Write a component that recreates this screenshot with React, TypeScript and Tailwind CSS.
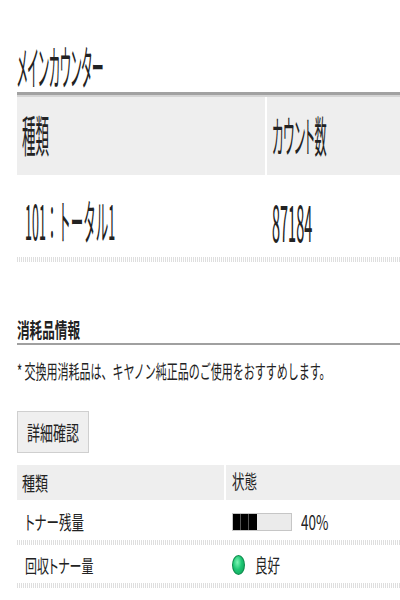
import React from "react";

const Dot = () => (
  <span className="inline-block w-[13px] h-[20px] rounded-[50%] border border-[#0c8a4a] bg-[radial-gradient(ellipse_at_40%_35%,#7df5b4_0%,#1ec774_45%,#0e9a55_100%)]" />
);

const Dots = () => (
  <div className="h-[5px] bg-[repeating-linear-gradient(90deg,#d6d6d6_0px,#d6d6d6_1px,transparent_1px,transparent_2px)] opacity-80" />
);

export default function App() {
  return (
    <div className="w-[400px] h-[600px] overflow-hidden bg-white pl-[17px] text-[#222] font-normal font-['Noto_Sans_CJK_JP','Noto_Sans_CJK_SC',sans-serif] [font-feature-settings:'palt']">
      {/* Title */}
      <div className="h-[92px] pt-[38px] flex items-center whitespace-nowrap">
        <span className="inline-block text-[12px] leading-none scale-y-[3.9] origin-center">メインカウンター</span>
      </div>
      <div className="h-[5px] bg-[#a2a2a2] border-b-[2px] border-[#d4d4d4]" />

      {/* Main counter table */}
      <div className="flex h-[78px] bg-[#eeeeee] whitespace-nowrap">
        <div className="w-[248px] flex items-center pl-[5px]">
          <span className="inline-block text-[13.5px] leading-none scale-y-[3.3]">種類</span>
        </div>
        <div className="w-[2px] bg-white" />
        <div className="flex-1 flex items-center pl-[5px]">
          <span className="inline-block text-[12.2px] leading-none scale-y-[3.5]">カウント数</span>
        </div>
      </div>
      <div className="flex h-[82px] pt-[12px] whitespace-nowrap">
        <div className="w-[250px] flex items-center pl-[8px]">
          <span className="inline-block text-[12.5px] leading-none scale-y-[3.8] [font-feature-settings:normal]">101：トータル1</span>
        </div>
        <div className="flex-1 flex items-center pl-[5px]">
          <span className="inline-block text-[14.5px] leading-none scale-y-[3.5]">87184</span>
        </div>
      </div>
      <Dots />

      {/* Consumables */}
      <div className="mt-[55px] h-[26px] flex items-center whitespace-nowrap">
        <span className="inline-block text-[12.6px] font-bold leading-none scale-y-[1.65]">消耗品情報</span>
      </div>
      <div className="h-[2px] bg-[#a0a0a0]" />

      <div className="mt-[13px] h-[26px] flex items-center whitespace-nowrap [font-feature-settings:normal]">
        <span className="inline-block text-[11px] leading-none scale-y-[1.75]">* 交換用消耗品は、キヤノン純正品のご使用をおすすめします。</span>
      </div>

      <div className="mt-[27px] w-[72px] h-[42px] border border-[#cfcfcf] bg-[#efefef] flex items-center justify-center whitespace-nowrap">
        <span className="inline-block text-[13px] leading-none scale-y-[1.6]">詳細確認</span>
      </div>

      <div className="mt-[12px] flex h-[35px] bg-[#eeeeee] whitespace-nowrap">
        <div className="w-[207px] flex items-center pl-[5px]">
          <span className="inline-block text-[13px] leading-none scale-y-[1.5]">種類</span>
        </div>
        <div className="w-[2px] bg-white" />
        <div className="flex-1 flex items-center pl-[6px]">
          <span className="inline-block text-[12.5px] leading-none scale-y-[1.5]">状態</span>
        </div>
      </div>

      <div className="flex h-[40px] pt-[4px] whitespace-nowrap">
        <div className="w-[209px] flex items-center pl-[8px]">
          <span className="inline-block text-[12.5px] leading-none scale-y-[1.55]">トナー残量</span>
        </div>
        <div className="flex-1 flex items-center pl-[6px]">
          <div className="w-[60px] h-[18px] border border-[#c6c6c6] bg-[#ebebeb] flex items-stretch">
            <div className="flex gap-[1px] bg-[#555]">
              <div className="w-[7px] bg-black" />
              <div className="w-[7px] bg-black" />
              <div className="w-[8px] bg-black" />
            </div>
          </div>
          <span className="ml-[9px] inline-block text-[13.5px] leading-none scale-y-[1.5]">40%</span>
        </div>
      </div>
      <Dots />

      <div className="flex h-[38px] pt-[2px] whitespace-nowrap">
        <div className="w-[209px] flex items-center pl-[8px]">
          <span className="inline-block text-[12px] leading-none scale-y-[1.55]">回収トナー量</span>
        </div>
        <div className="flex-1 flex items-center pl-[6px]">
          <Dot />
          <span className="ml-[10px] inline-block text-[12.5px] leading-none scale-y-[1.55]">良好</span>
        </div>
      </div>
      <Dots />
    </div>
  );
}
